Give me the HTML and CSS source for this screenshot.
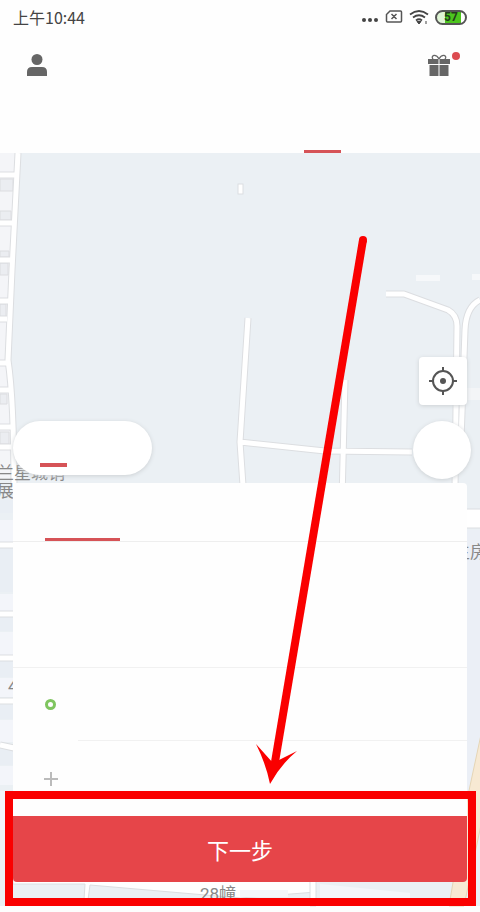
FILE: index.html
```
<!DOCTYPE html>
<html lang="zh-CN">

<head>
    <meta charset="UTF-8">
    <meta name="viewport" content="width=device-width, initial-scale=1">
    <title>下一步</title>
    <link rel="stylesheet" href="styles.css">
</head>

<body>

    <header>
        <div class="status">
            <span class="time">上午10:44</span>
            <div class="status_icons">
                <svg width="18" height="18" viewBox="0 0 18 18" fill="#444">
                    <circle cx="3" cy="12" r="2" />
                    <circle cx="9" cy="12" r="2" />
                    <circle cx="15" cy="12" r="2" />
                </svg>
                <svg width="18" height="18" viewBox="0 0 18 18" fill="none" stroke="#555" stroke-width="1.5">
                    <path d="M5 3h10.500q1 0 1 1v9q0 1-1 1h-13q-1 0-1-1v-6.500zM6.500 6l5 5M11.500 6l-5 5" />
                </svg>
                <svg width="20" height="18" viewBox="0 0 20 18" fill="none" stroke="#444" stroke-width="1.800">
                    <path d="M1 6.500Q10-.5 19 6.500M4 9.500Q10 5 16 9.500M7 12.500Q10 10 13 12.500" />
                    <path d="M8 13.500h4l-2 2.500zM17 13v3" stroke-width="1" fill="#444" />
                </svg>
                <div class="battery">57</div>
            </div>
        </div>

        <div class="toolbar">
            <button class="icon_knap" aria-label="我的">
                <svg width="22" height="24" viewBox="0 0 22 24" fill="#666">
                    <circle cx="11" cy="6.500" r="5.500" />
                    <path d="M1 23v-4q0-5 5-5h10q5 0 5 5v4z" />
                </svg>
            </button>
            <button class="icon_knap gift" aria-label="礼物">
                <svg width="22" height="24" viewBox="0 0 22 24" fill="#666">
                    <path d="M0 6h10.500v5H0zM11.500 6H22v5H11.500zM1.500 12h9v11h-9zM11.500 12h9v11h-9z" />
                    <path d="M11 6Q9 2 6 2.300Q3 3.500 5 6M11 6Q13 2 16 2.300Q19 3.500 17 6" fill="none" stroke="#666" stroke-width="1.300" />
                </svg>
            </button>
        </div>

        <nav><span class="valgt"></span></nav>
    </header>

    <main>
        <svg class="map" viewBox="0 153 480 759" preserveAspectRatio="xMidYMin slice">
            <rect x="0" y="153" width="480" height="753" fill="#ebf0f4" />
            <rect x="0" y="906" width="480" height="6" fill="#fdfdfd" />

            <!-- blocks along the left edge -->
            <path d="M0 153H19L12 300L6 350L14 420V480H0z" fill="#f4f5f8" />
            <path d="M0 179h13v12H0zM0 211h11v9H0zM0 251h9v6H0zM0 263h8v12H0zM0 304h6v13H0zM0 394h7v10H0zM0 432h9v12H0z" fill="#ebedf1" stroke="#dcdde0" />
            <path d="M0 500h13v13H0zM0 548h13v44H0zM0 617h13v14H0zM0 661h13v16H0zM0 705h13v14H0zM0 749h13v16H0z" fill="#e9eef4" />
            <path d="M0 520h13v22H0zM0 594h13v18H0zM0 632h13v23H0zM0 678h13v19H0zM0 720h13v22H0zM0 766h13v19H0zM0 791h8v39H0z" fill="#f3f5fa" />

            <g fill="none" stroke-linejoin="round">
                <g stroke="#dcdee1" stroke-width="7">
                    <path d="M0 175H15M0 223H13M0 260H11M0 301H9M0 319H7M0 363H8M0 390H10M0 427H14M0 447H14" />
                    <path d="M18 153L12 270L8 360Q14 400 14 490" />
                    <path d="M248 318L240 442L244 500M240 442L325 451L412 452M345 380L342 500M386 294H404L448 310Q457 315 457 326L455 490M480 300Q466 307 465 330L461 440" />
                </g>
                <g stroke="#fff" stroke-width="5">
                    <path d="M0 175H15M0 223H13M0 260H11M0 301H9M0 319H7M0 363H8M0 390H10M0 427H14M0 447H14" />
                    <path d="M18 153L12 270L8 360Q14 400 14 490" />
                    <path d="M248 318L240 442L244 500M240 442L325 451L412 452M345 380L342 500M386 294H404L448 310Q457 315 457 326L455 490M480 300Q466 307 465 330L461 440" />
                </g>
                <path d="M0 545H14M0 614H14M0 658H14M0 701H14M0 745L14 748" stroke="#dcdee1" stroke-width="7" />
                <path d="M0 545H14M0 614H14M0 658H14M0 701H14M0 745L14 748" stroke="#fff" stroke-width="5" />
            </g>

            <rect x="238" y="184" width="5" height="10" fill="#fff" stroke="#dcdee1" />
            <path d="M416 275h24v6h-24zM472 274h8v6h-8z" fill="#f6f8fa" />
            <path d="M466 388h14v12h-14z" fill="#f3f5f7" />
            <rect x="465" y="509" width="17" height="19" fill="#fff" stroke="#dcdee1" />
            <path d="M467 530h13v232l-13 50z" fill="#ebeff6" />
            <path d="M482 730L467 800L449 906H464L482 820z" fill="#f7e9d3" stroke="#e5d5b6" />

            <!-- streets under the button -->
            <path d="M13 880H310L316 892L240 898L90 885L88 900H84L85 884H13z" fill="#fff" stroke="#dcdee1" />
            <path d="M310 880h6v26h-6z" fill="#fff" stroke="#dcdee1" />
            <path d="M320 884l90 9v7h-90zM240 890h48v7h-48z" fill="#f4f6fa" />

            <g class="map_text">
                <text x="-3" y="479">兰星城销</text>
                <text x="-3" y="497">展</text>
                <text x="453" y="558">主房</text>
                <text x="8" y="692">4</text>
                <text x="200" y="900">28幢</text>
            </g>
        </svg>

        <section class="controls">
            <div class="pill"><span class="valgt"></span></div>
            <div class="side">
                <button class="locate" aria-label="定位">
                    <svg width="28" height="28" viewBox="0 0 28 28" fill="none" stroke="#555" stroke-width="2">
                        <circle cx="14" cy="14" r="10" />
                        <circle cx="14" cy="14" r="3" fill="#555" stroke="none" />
                        <path d="M14 0v5M14 23v5M0 14h5M23 14h5" />
                    </svg>
                </button>
                <div class="round"></div>
            </div>
        </section>

        <section class="card">
            <div class="card_tabs"><span class="valgt"></span></div>
            <div class="banner"></div>
            <div class="row">
                <span class="start"></span>
            </div>
            <div class="row last">
                <svg width="14" height="14" viewBox="0 0 14 14" stroke="#bbb" stroke-width="2">
                    <path d="M7 0v14M0 7h14" />
                </svg>
            </div>
            <div class="action">
                <button class="next">下一步</button>
            </div>
        </section>

        <!-- arrow that points at the button -->
        <svg class="arrow" width="108" height="550" viewBox="0 0 108 550">
            <path d="M107 5L18 533" fill="none" stroke="#fa0000" stroke-width="8" />
            <circle cx="107" cy="5" r="4" fill="#fa0000" />
            <path d="M0 509L17 528L41 516Q25 529 14 549Q10 529 0 509z" fill="#fa0000" />
        </svg>
    </main>

</body>

</html>
```
FILE: styles.css
```
* {
    box-sizing: border-box;
}

body {
    margin: 0;
    min-height: 100vh;
    display: flex;
    flex-direction: column;
    background-color: #fefefe;
    font-family: Roboto, "Noto Sans CJK SC", sans-serif;
}

button {
    border: none;
    padding: 0;
    cursor: pointer;
}

svg {
    display: block;
}

.valgt {
    display: block;
    background-color: #d65357;
}

.status {
    display: flex;
    justify-content: space-between;
    align-items: center;
    height: 34px;
    padding: 0 13px;
}

.time {
    font-family: "Noto Sans CJK SC", sans-serif;
    font-size: 16px;
    color: #444;
}

.status_icons {
    display: flex;
    align-items: center;
    gap: 6px;
}

.battery {
    width: 32px;
    height: 15px;
    border: 2px solid #555;
    border-radius: 8px;
    background: linear-gradient(to right, #dff5d5 30%, #4cc51d 30%, #4cc51d 85%, #fff 85%);
    color: #243c1c;
    font-size: 12px;
    font-weight: bold;
    line-height: 11px;
    text-align: center;
}

.toolbar {
    display: flex;
    justify-content: space-between;
    align-items: center;
    height: 62px;
    padding: 0 30px 0 26px;
}

.icon_knap {
    position: relative;
    background: none;
}

.gift::after {
    content: "";
    position: absolute;
    top: -1px;
    right: -10px;
    width: 8px;
    height: 8px;
    border-radius: 50%;
    background-color: #dc4b50;
}

nav {
    display: flex;
    align-items: flex-end;
    justify-content: flex-end;
    height: 57px;
    padding-right: 29%;
}

nav .valgt {
    width: 37px;
    height: 3px;
}

main {
    position: relative;
    flex: 1;
    padding: 204px 13px 30px;
    overflow: hidden;
}

.map {
    position: absolute;
    top: 0;
    left: 0;
    width: 100%;
    height: 100%;
}

.map_text {
    font-size: 17px;
    fill: #888;
}

.controls {
    position: relative;
    display: flex;
    justify-content: space-between;
    align-items: flex-end;
    padding-bottom: 8px;
}

.pill {
    display: flex;
    align-items: flex-end;
    width: 139px;
    height: 54px;
    padding: 0 27px 8px;
    border-radius: 27px;
    background-color: #fff;
    box-shadow: 0 1px 4px #ccd0d3;
}

.pill .valgt {
    width: 27px;
    height: 4px;
}

.side {
    display: flex;
    flex-direction: column;
    align-items: flex-end;
    gap: 16px;
    margin-bottom: -4px;
}

.locate {
    display: grid;
    place-items: center;
    width: 48px;
    height: 48px;
    border-radius: 4px;
    background-color: #fff;
    box-shadow: 0 1px 4px #ccd0d3;
}

.round {
    width: 58px;
    height: 58px;
    margin-right: -4px;
    border-radius: 50%;
    background-color: #fff;
    box-shadow: 0 1px 4px #ccd0d3;
}

.card {
    position: relative;
    border-radius: 4px;
    background-color: #fefefe;
}

.card_tabs {
    display: flex;
    align-items: flex-end;
    height: 59px;
    padding-left: 32px;
    border-bottom: 1px solid #eee;
}

.card_tabs .valgt {
    width: 75px;
    height: 3px;
}

.banner {
    height: 126px;
    border-bottom: 1px solid #f1f1f1;
}

.row {
    display: flex;
    align-items: center;
    height: 73px;
    padding-left: 32px;
}

.row::after {
    content: "";
    align-self: flex-end;
    flex: 1;
    margin-left: 22px;
    border-bottom: 1px solid #f1f1f1;
}

.last {
    height: 75px;
    padding-left: 31px;
}

.last::after {
    display: none;
}

.start {
    width: 11px;
    height: 11px;
    border: 3px solid #7fc55f;
    border-radius: 50%;
}

.action {
    position: relative;
}

/* red frame around the button */
.action::after {
    content: "";
    position: absolute;
    top: -25px;
    right: -9px;
    bottom: -24px;
    left: -8px;
    border: 8px solid #fa0000;
    pointer-events: none;
}

.next {
    display: block;
    width: 100%;
    height: 66px;
    border-radius: 0 0 4px 4px;
    background-color: #e64549;
    color: #fff;
    font-family: inherit;
    font-size: 22px;
}

.arrow {
    position: absolute;
    top: 82px;
    left: 256px;
    overflow: visible;
    pointer-events: none;
}
```
